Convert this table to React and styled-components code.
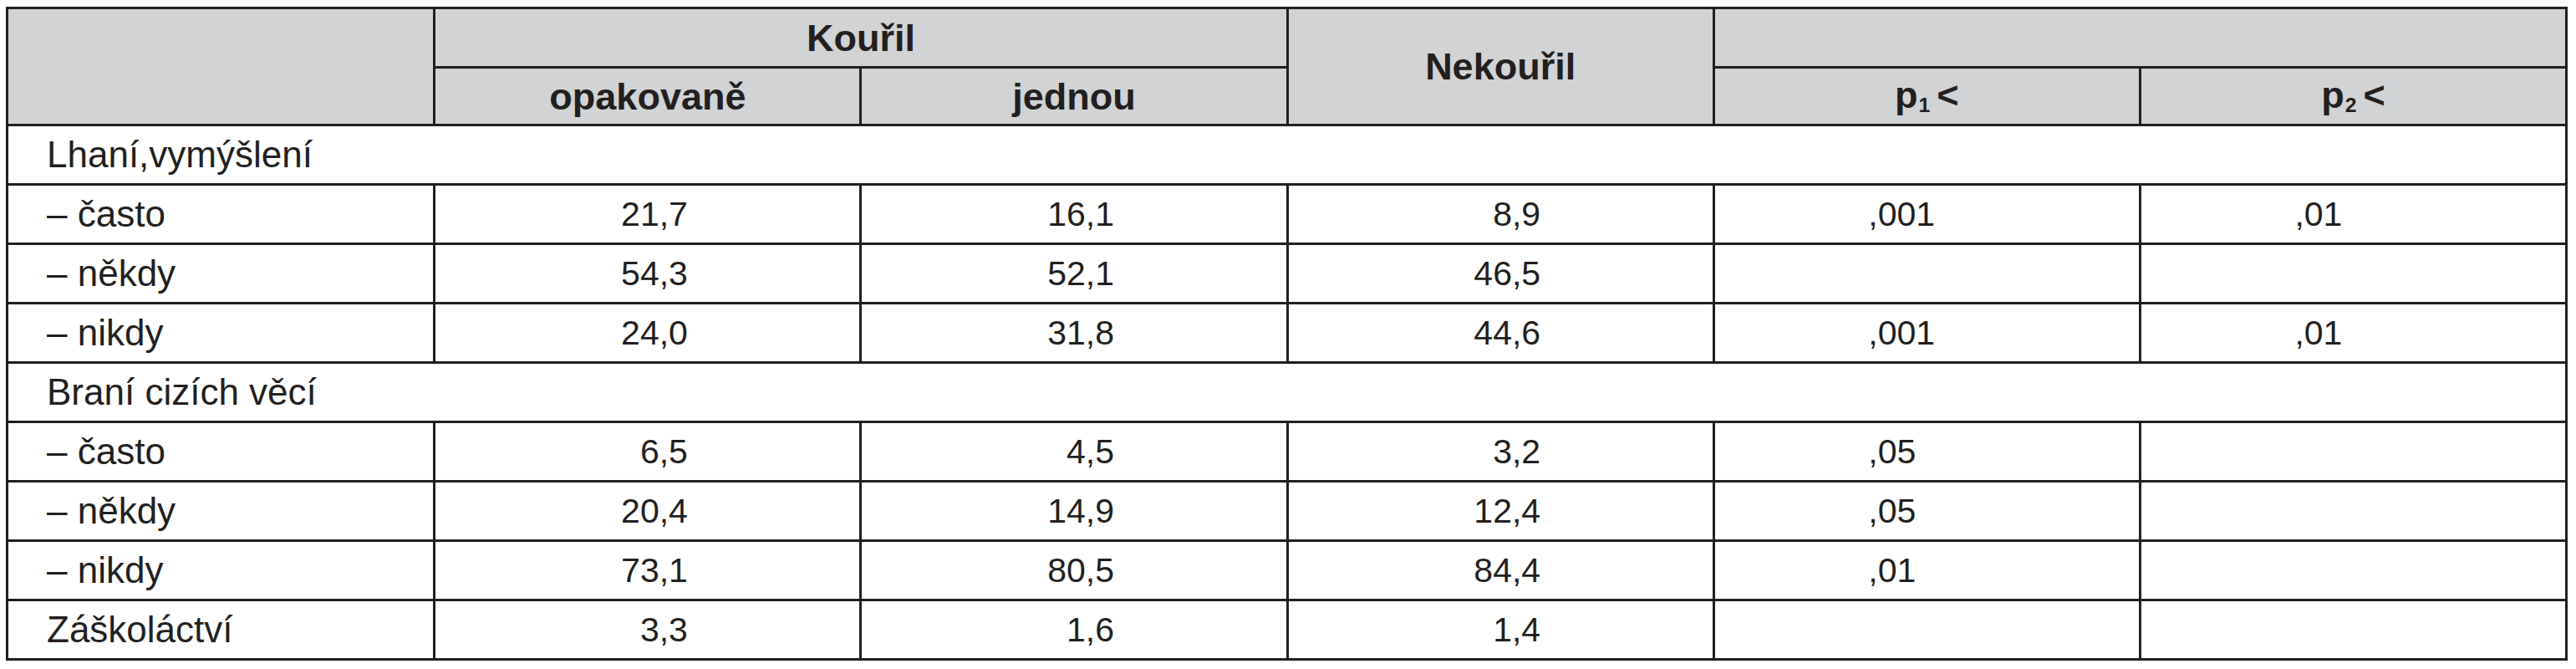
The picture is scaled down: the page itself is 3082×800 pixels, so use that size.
import React from "react";
import styled, { createGlobalStyle } from "styled-components";

const Global = createGlobalStyle`
  html, body { margin: 0; padding: 0; background: #ffffff; }
  body { padding: 8px 10px 8px 7px; }
`;

const Table = styled.table`
  width: 100%;
  border-collapse: collapse;
  table-layout: fixed;
  font-family: "Liberation Sans", Arial, sans-serif;
  font-size: 40px;
  color: #231f20;
  border: 3px solid #231f20;
`;

const HeadRow = styled.tr`
  height: ${(p) => p.$h}px;
`;

const HeadCell = styled.th`
  background: #d1d3d4;
  border: 3px solid #231f20;
  font-weight: 700;
  font-size: 45px;
  text-align: center;
  vertical-align: middle;
  padding: 0;
  line-height: 1;
`;

const Row = styled.tr`
  height: 71px;
`;

const LabelCell = styled.td`
  border: 3px solid #231f20;
  padding: 0 0 0 46px;
  font-size: 44px;
  text-align: left;
  vertical-align: middle;
  line-height: 1;
  white-space: nowrap;
`;

const SectionCell = styled(LabelCell)`
  border-right: 3px solid #231f20;
`;

const DataCell = styled.td`
  border: 3px solid #231f20;
  padding: 0;
  font-size: 41px;
  text-align: center;
  vertical-align: middle;
  line-height: 1;
`;

const Num = styled.span`
  display: inline-block;
  width: ${(p) => p.$w}px;
  text-align: ${(p) => p.$align};
`;

const Sub = styled.sub`
  font-size: 0.55em;
  vertical-align: -0.2em;
  margin: 0 8px 0 1px;
`;

const sections = [
  {
    title: "Lhaní,vymýšlení",
    rows: [
      ["– často", "21,7", "16,1", "8,9", ",001", ",01"],
      ["– někdy", "54,3", "52,1", "46,5", "", ""],
      ["– nikdy", "24,0", "31,8", "44,6", ",001", ",01"],
    ],
  },
  {
    title: "Braní cizích věcí",
    rows: [
      ["– často", "6,5", "4,5", "3,2", ",05", ""],
      ["– někdy", "20,4", "14,9", "12,4", ",05", ""],
      ["– nikdy", "73,1", "80,5", "84,4", ",01", ""],
    ],
  },
];

const DataRow = ({ cells }) => (
  <Row>
    <LabelCell>{cells[0]}</LabelCell>
    {cells.slice(1, 4).map((v, i) => (
      <DataCell key={i}>
        <Num $w={96} $align="right">{v}</Num>
      </DataCell>
    ))}
    {cells.slice(4).map((v, i) => (
      <DataCell key={"p" + i}>
        <Num $w={140} $align="left">{v}</Num>
      </DataCell>
    ))}
  </Row>
);

export default function App() {
  return (
    <>
      <Global />
      <Table>
        <colgroup>
          <col style={{ width: "16.7%" }} />
          <col />
          <col />
          <col />
          <col />
          <col />
        </colgroup>
        <thead>
          <HeadRow $h={71}>
            <HeadCell rowSpan={2} />
            <HeadCell colSpan={2}>Kouřil</HeadCell>
            <HeadCell rowSpan={2}>Nekouřil</HeadCell>
            <HeadCell colSpan={2} />
          </HeadRow>
          <HeadRow $h={69}>
            <HeadCell>opakovaně</HeadCell>
            <HeadCell>jednou</HeadCell>
            <HeadCell>
              p<Sub>1</Sub>&lt;
            </HeadCell>
            <HeadCell>
              p<Sub>2</Sub>&lt;
            </HeadCell>
          </HeadRow>
        </thead>
        <tbody>
          {sections.map((s) => (
            <React.Fragment key={s.title}>
              <Row>
                <SectionCell colSpan={6}>{s.title}</SectionCell>
              </Row>
              {s.rows.map((r, i) => (
                <DataRow key={i} cells={r} />
              ))}
            </React.Fragment>
          ))}
          <Row>
            <LabelCell>Záškoláctví</LabelCell>
            <DataCell>
              <Num $w={96} $align="right">3,3</Num>
            </DataCell>
            <DataCell>
              <Num $w={96} $align="right">1,6</Num>
            </DataCell>
            <DataCell>
              <Num $w={96} $align="right">1,4</Num>
            </DataCell>
            <DataCell />
            <DataCell />
          </Row>
        </tbody>
      </Table>
    </>
  );
}
